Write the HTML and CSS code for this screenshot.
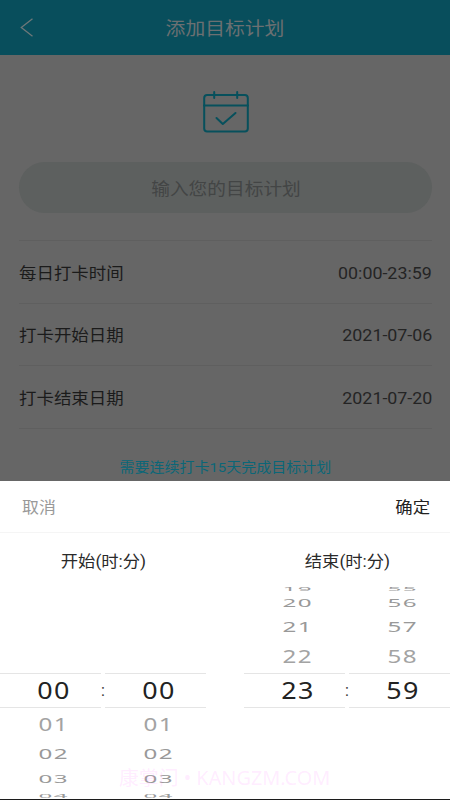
FILE: index.html
```html
<!DOCTYPE html>
<html lang="zh-CN">
<head>
<meta charset="utf-8">
<title>添加目标计划</title>
<link rel="stylesheet" href="styles.css">
</head>
<body>
<div class="page">
  <header class="bar">
    <svg class="back" width="14" height="20" viewBox="0 0 14 20"><path d="M12.5 .8 1.300 9.500l11.200 8.700"/></svg>
    <h1 class="title">添加目标计划</h1>
  </header>
  <main class="content">
    <svg class="calendar" width="46" height="42" viewBox="0 0 46 42"><rect x="1.200" y="4" width="43.600" height="36.500" rx="3"/><path d="M1 14.500h44M11.200 1v6M34.200 1v6M13.500 27l6.300 6 12.700-11"/></svg>
    <div class="field"><span class="hint">输入您的目标计划</span></div>
    <div class="rows">
      <div class="row"><span class="label">每日打卡时间</span><span class="value">00:00-23:59</span></div>
      <div class="row"><span class="label">打卡开始日期</span><span class="value">2021-07-06</span></div>
      <div class="row"><span class="label">打卡结束日期</span><span class="value">2021-07-20</span></div>
    </div>
    <p class="tip"><span>需要连续打卡15天完成目标计划</span></p>
  </main>
  <section class="sheet">
    <div class="actions"><span class="cancel">取消</span><span class="confirm">确定</span></div>
    <div class="pickers">
      <div class="picker">
        <h2 class="heading"><span>开始(时:分)</span></h2>
        <div class="wheels">
          <div class="wheel">
            <div class="n far4"></div><div class="n far3"></div><div class="n far2"></div><div class="n far1"></div>
            <div class="n now"><span>00</span></div>
            <div class="n near1"><span>01</span></div><div class="n near2"><span>02</span></div><div class="n near3"><span>03</span></div><div class="n near4"><span>04</span></div>
          </div>
          <span class="colon">:</span>
          <div class="wheel">
            <div class="n far4"></div><div class="n far3"></div><div class="n far2"></div><div class="n far1"></div>
            <div class="n now"><span>00</span></div>
            <div class="n near1"><span>01</span></div><div class="n near2"><span>02</span></div><div class="n near3"><span>03</span></div><div class="n near4"><span>04</span></div>
          </div>
        </div>
      </div>
      <div class="picker">
        <h2 class="heading"><span>结束(时:分)</span></h2>
        <div class="wheels">
          <div class="wheel">
            <div class="n far4"><span>19</span></div><div class="n far3"><span>20</span></div><div class="n far2"><span>21</span></div><div class="n far1"><span>22</span></div>
            <div class="n now"><span>23</span></div>
          </div>
          <span class="colon">:</span>
          <div class="wheel">
            <div class="n far4"><span>55</span></div><div class="n far3"><span>56</span></div><div class="n far2"><span>57</span></div><div class="n far1"><span>58</span></div>
            <div class="n now"><span>59</span></div>
          </div>
        </div>
      </div>
    </div>
    <div class="watermark">康掌门 • KANGZM.COM</div>
  </section>
</div>
</body>
</html>
```

FILE: styles.css
```css
* { box-sizing: border-box; }

body {
  margin: 0;
  font-family: Roboto, "Noto Sans CJK SC", sans-serif;
  color: #1b1b1b;
}

.page {
  width: 450px;
  height: 800px;
  display: flex;
  flex-direction: column;
  overflow: hidden;
  background: #666;
}

.bar {
  height: 55px;
  flex: none;
  display: flex;
  align-items: center;
  padding: 0 20px;
  background: #084e5c;
}

.back { fill: none; stroke: #6d7779; stroke-width: 1.3; }

.title {
  flex: 1;
  margin: 2px 14px 0 0;
  text-align: center;
  font-size: 18px;
  font-weight: 400;
  line-height: 26px;
  color: #6b7072;
  transform: scaleX(1.1);
}

.content {
  flex: none;
  height: 426px;
  padding: 36px 18px 0 19px;
  display: flex;
  flex-direction: column;
  align-items: center;
}

.calendar {
  flex: none;
  fill: none;
  stroke: #07505c;
  stroke-width: 2;
  stroke-linecap: round;
  stroke-linejoin: round;
}

.field {
  width: 100%;
  height: 51px;
  margin-top: 29px;
  flex: none;
  display: flex;
  align-items: center;
  justify-content: center;
  border-radius: 26px;
  background: #5d605f;
}

.hint { font-size: 17px; color: #434545; transform: scaleX(1.1); }

.rows { width: 100%; margin-top: 27px; border-top: 1px solid #5f5f5f; }

.row {
  height: 62.500px;
  display: flex;
  align-items: center;
  justify-content: space-between;
  border-bottom: 1px solid #5f5f5f;
}

.label { font-size: 16px; transform: scaleX(1.090); transform-origin: left; }
.value { padding-top: 3px; font-size: 16.500px; color: #242424; transform: scaleX(1.080); transform-origin: right; }

.tip {
  margin: 28px 0 0;
  font-size: 13.500px;
  line-height: 20px;
  color: #0b6678;
}
.tip span { display: inline-block; transform: scaleX(1.110); }

.sheet {
  position: relative;
  flex: 1;
  background: #fff;
  border-bottom: 1px solid #1c1c1c;
}

.actions {
  height: 52px;
  padding: 0 20px 1px 22px;
  display: flex;
  align-items: center;
  justify-content: space-between;
  border-bottom: 1px solid #f5f5f5;
  font-size: 15.500px;
}
.cancel { color: #999; transform: scaleX(1.090); transform-origin: left; }
.confirm { color: #222; transform: scaleX(1.120); transform-origin: right; }

.pickers { display: flex; justify-content: space-between; }
.picker { width: 206px; }

.heading {
  height: 51px;
  margin: 0;
  padding-top: 16px;
  text-align: center;
  font-size: 16px;
  line-height: 26px;
  font-weight: 400;
  color: #2a2a2a;
}
.heading span { display: inline-block; transform: scaleX(1.080); }

.wheels { display: flex; height: 215px; overflow: hidden; }
.wheel { width: 101px; flex: none; }

.colon {
  width: 4px;
  flex: none;
  display: flex;
  justify-content: center;
  padding-top: 97px;
  font-size: 16px;
  line-height: 20px;
  color: #333;
}

.n {
  display: flex;
  align-items: center;
  justify-content: center;
  padding: 0 0 2px 5px;
  font-family: "Noto Sans", sans-serif;
  font-size: 22px;
  line-height: 22px;
  color: #999;
}
.n span { flex: none; letter-spacing: 1.200px; margin-right: -1.200px; }

.now {
  height: 35px;
  border-top: 1px solid #e5e5e5;
  border-bottom: 1px solid #e5e5e5;
  font-size: 24px;
  color: #222;
}
.now span { transform: scaleX(1.120); }

.far1 { height: 34px; }
.far2 { height: 24px; }
.far3 { height: 24px; }
.far4 { height: 7px; padding-bottom: 0; }
.near1 { height: 31px; }
.near2 { height: 30px; }
.near3 { height: 19px; }
.near4 { height: 14px; padding-bottom: 0; }

.far1 span, .near1 span { transform: scale(1.100, 0.840); color: #a3a3a3; }
.far2 span, .near2 span { transform: scale(1.100, 0.690); }
.far3 span, .near3 span { transform: scale(1.100, 0.520); }
.far4 span, .near4 span { transform: scale(1.100, 0.280); }

.watermark {
  position: absolute;
  left: 119px;
  top: 285px;
  white-space: nowrap;
  font-family: "Noto Sans", "Noto Sans CJK SC", sans-serif;
  font-size: 19px;
  line-height: 24px;
  color: rgba(255, 140, 255, 0.170);
  transform: scaleX(1.045);
  transform-origin: left;
}
```
